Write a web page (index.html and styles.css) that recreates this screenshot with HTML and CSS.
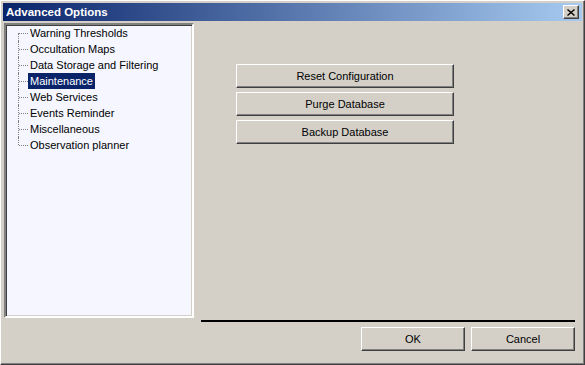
FILE: index.html
```html
<!DOCTYPE html>
<html lang="en">
<head>
    <meta charset="UTF-8">
    <title>Advanced Options</title>
    <link rel="stylesheet" href="styles.css">
</head>
<body>
    <div class="window">
        <div class="titlebar">
            <span class="title">Advanced Options</span>
            <button class="close" title="Close">
                <svg width="8" height="7" viewBox="0 0 8 7">
                    <path d="M0.5 0.5 L7.5 6.5 M7.5 0.5 L0.5 6.5" stroke="#000" stroke-width="1.4" fill="none"/>
                </svg>
            </button>
        </div>

        <div class="main">
            <ul class="tree">
                <li class="first"><span class="branch"></span><span class="label">Warning Thresholds</span></li>
                <li><span class="branch"></span><span class="label">Occultation Maps</span></li>
                <li><span class="branch"></span><span class="label">Data Storage and Filtering</span></li>
                <li class="selected"><span class="branch"></span><span class="label">Maintenance</span></li>
                <li><span class="branch"></span><span class="label">Web Services</span></li>
                <li><span class="branch"></span><span class="label">Events Reminder</span></li>
                <li><span class="branch"></span><span class="label">Miscellaneous</span></li>
                <li class="last"><span class="branch"></span><span class="label">Observation planner</span></li>
            </ul>

            <div class="page">
                <div class="actions">
                    <button class="btn wide">Reset Configuration</button>
                    <button class="btn wide">Purge Database</button>
                    <button class="btn wide">Backup Database</button>
                </div>
            </div>
        </div>

        <div class="footer">
            <div class="separator"></div>
            <div class="footer-buttons">
                <button class="btn">OK</button>
                <button class="btn">Cancel</button>
            </div>
        </div>
    </div>
</body>
</html>
```

FILE: styles.css
```css
* {
    margin: 0;
    padding: 0;
    box-sizing: border-box;
}

body {
    font-family: "Liberation Sans", Arial, sans-serif;
    font-size: 11px;
    color: #000;
    background: #d4d0c8;
}

.window {
    width: 585px;
    height: 365px;
    background: #d4d0c8;
    border-left: 1px solid #fff;
    border-top: 1px solid #fff;
    border-right: 1px solid #404040;
    border-bottom: 1px solid #404040;
    box-shadow: inset -1px -1px 0 #808080;
}

/* caption */
.titlebar {
    height: 18px;
    margin: 2px 2px 0 2px;
    padding: 0 3px 0 3px;
    display: flex;
    align-items: center;
    justify-content: space-between;
    background: linear-gradient(to right, #0a246a, #a6caf0);
}

.title {
    font-size: 11.5px;
    font-weight: bold;
    color: #fff;
}

.close {
    width: 16px;
    height: 14px;
    display: flex;
    align-items: center;
    justify-content: center;
    background: #d4d0c8;
    border: 1px solid;
    border-color: #fff #404040 #404040 #fff;
    box-shadow: inset -1px -1px 0 #808080;
}

.main {
    display: flex;
    margin-top: 2px;
    height: 296px;
}

/* tree view */
.tree {
    list-style: none;
    width: 190px;
    height: 295px;
    margin-left: 3px;
    background: #f5f6ff;
    border: 2px solid;
    border-color: #808080 #fff #fff #808080;
    box-shadow: inset 1px 1px 0 #404040, inset -1px -1px 0 #d4d0c8;
}

.tree li {
    display: flex;
    height: 16px;
    line-height: 16px;
}

.branch {
    position: relative;
    width: 10px;
    height: 16px;
    margin-left: 12px;
}

.branch::before {
    content: "";
    position: absolute;
    left: 0;
    top: 0;
    bottom: 0;
    border-left: 1px dotted #808080;
}

.branch::after {
    content: "";
    position: absolute;
    left: 1px;
    right: 0;
    top: 8px;
    border-top: 1px dotted #808080;
}

.tree li.first .branch::before {
    top: 8px;
}

.tree li.last .branch::before {
    bottom: 8px;
}

.label {
    padding: 0 2px;
    white-space: nowrap;
}

.tree li.selected .label {
    background: #0a246a;
    color: #fff;
}

/* right side page */
.page {
    flex: 1;
}

.actions {
    display: flex;
    flex-direction: column;
    gap: 4px;
    margin: 41px 0 0 42px;
}

.btn {
    font-family: inherit;
    font-size: 11px;
    color: #000;
    width: 104px;
    height: 24px;
    background: #d4d0c8;
    border: 1px solid;
    border-color: #fff #404040 #404040 #fff;
    box-shadow: inset -1px -1px 0 #808080;
}

.btn.wide {
    width: 218px;
}

.footer {
    padding: 1px 9px 0 200px;
}

.separator {
    height: 2px;
    background: #000;
}

.footer-buttons {
    display: flex;
    justify-content: flex-end;
    gap: 6px;
    margin-top: 5px;
}
```
